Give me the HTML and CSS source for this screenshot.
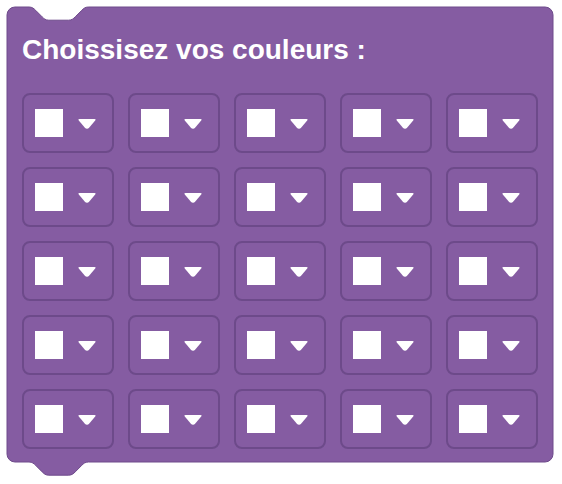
FILE: index.html
```html
<!DOCTYPE html>
<html lang="fr">
<head>
<meta charset="utf-8">
<title>Choissisez vos couleurs</title>
<link rel="stylesheet" href="styles.css">
</head>
<body>
<div class="block">
  <svg class="shape" width="548" height="472" viewBox="-1 -1 548 472" aria-hidden="true">
    <path class="body" d="M 0 8 A 8 8 0 0 1 8 0 L 22 0 C 25.3 0 26.95 1.65 28.6 3.3 L 35.2 9.9 C 36.85 11.55 38.5 13.2 41.8 13.2 L 61.6 13.2 C 64.9 13.2 66.55 11.55 68.2 9.9 L 74.8 3.3 C 76.45 1.65 78.1 0 81.4 0 L 538 0 A 8 8 0 0 1 546 8 L 546 447 A 8 8 0 0 1 538 455 L 81.4 455 C 78.1 455 76.45 456.65 74.8 458.3 L 68.2 464.9 C 66.55 466.55 64.9 468.2 61.6 468.2 L 41.8 468.2 C 38.5 468.2 36.85 466.55 35.2 464.9 L 28.6 458.3 C 26.95 456.65 25.3 455 22 455 L 8 455 A 8 8 0 0 1 0 447 Z" />
  </svg>
  <div class="title">Choissisez vos couleurs :</div>
  <div class="grid">
    <div class="cell"><span class="swatch"></span><svg class="arrow" width="18" height="10" viewBox="0 0 18 10"><path d="M1.5,0 H16.5 Q18.3,0 17.2,1.6 L11.3,8.4 Q9,10.9 6.7,8.4 L0.8,1.6 Q-0.3,0 1.5,0 Z"/></svg></div>
    <div class="cell"><span class="swatch"></span><svg class="arrow" width="18" height="10" viewBox="0 0 18 10"><path d="M1.5,0 H16.5 Q18.3,0 17.2,1.6 L11.3,8.4 Q9,10.9 6.7,8.4 L0.8,1.6 Q-0.3,0 1.5,0 Z"/></svg></div>
    <div class="cell"><span class="swatch"></span><svg class="arrow" width="18" height="10" viewBox="0 0 18 10"><path d="M1.5,0 H16.5 Q18.3,0 17.2,1.6 L11.3,8.4 Q9,10.9 6.7,8.4 L0.8,1.6 Q-0.3,0 1.5,0 Z"/></svg></div>
    <div class="cell"><span class="swatch"></span><svg class="arrow" width="18" height="10" viewBox="0 0 18 10"><path d="M1.5,0 H16.5 Q18.3,0 17.2,1.6 L11.3,8.4 Q9,10.9 6.7,8.4 L0.8,1.6 Q-0.3,0 1.5,0 Z"/></svg></div>
    <div class="cell"><span class="swatch"></span><svg class="arrow" width="18" height="10" viewBox="0 0 18 10"><path d="M1.5,0 H16.5 Q18.3,0 17.2,1.6 L11.3,8.4 Q9,10.9 6.7,8.4 L0.8,1.6 Q-0.3,0 1.5,0 Z"/></svg></div>

    <div class="cell"><span class="swatch"></span><svg class="arrow" width="18" height="10" viewBox="0 0 18 10"><path d="M1.5,0 H16.5 Q18.3,0 17.2,1.6 L11.3,8.4 Q9,10.9 6.7,8.4 L0.8,1.6 Q-0.3,0 1.5,0 Z"/></svg></div>
    <div class="cell"><span class="swatch"></span><svg class="arrow" width="18" height="10" viewBox="0 0 18 10"><path d="M1.5,0 H16.5 Q18.3,0 17.2,1.6 L11.3,8.4 Q9,10.9 6.7,8.4 L0.8,1.6 Q-0.3,0 1.5,0 Z"/></svg></div>
    <div class="cell"><span class="swatch"></span><svg class="arrow" width="18" height="10" viewBox="0 0 18 10"><path d="M1.5,0 H16.5 Q18.3,0 17.2,1.6 L11.3,8.4 Q9,10.9 6.7,8.4 L0.8,1.6 Q-0.3,0 1.5,0 Z"/></svg></div>
    <div class="cell"><span class="swatch"></span><svg class="arrow" width="18" height="10" viewBox="0 0 18 10"><path d="M1.5,0 H16.5 Q18.3,0 17.2,1.6 L11.3,8.4 Q9,10.9 6.7,8.4 L0.8,1.6 Q-0.3,0 1.5,0 Z"/></svg></div>
    <div class="cell"><span class="swatch"></span><svg class="arrow" width="18" height="10" viewBox="0 0 18 10"><path d="M1.5,0 H16.5 Q18.3,0 17.2,1.6 L11.3,8.4 Q9,10.9 6.7,8.4 L0.8,1.6 Q-0.3,0 1.5,0 Z"/></svg></div>

    <div class="cell"><span class="swatch"></span><svg class="arrow" width="18" height="10" viewBox="0 0 18 10"><path d="M1.5,0 H16.5 Q18.3,0 17.2,1.6 L11.3,8.4 Q9,10.9 6.7,8.4 L0.8,1.6 Q-0.3,0 1.5,0 Z"/></svg></div>
    <div class="cell"><span class="swatch"></span><svg class="arrow" width="18" height="10" viewBox="0 0 18 10"><path d="M1.5,0 H16.5 Q18.3,0 17.2,1.6 L11.3,8.4 Q9,10.9 6.7,8.4 L0.8,1.6 Q-0.3,0 1.5,0 Z"/></svg></div>
    <div class="cell"><span class="swatch"></span><svg class="arrow" width="18" height="10" viewBox="0 0 18 10"><path d="M1.5,0 H16.5 Q18.3,0 17.2,1.6 L11.3,8.4 Q9,10.9 6.7,8.4 L0.8,1.6 Q-0.3,0 1.5,0 Z"/></svg></div>
    <div class="cell"><span class="swatch"></span><svg class="arrow" width="18" height="10" viewBox="0 0 18 10"><path d="M1.5,0 H16.5 Q18.3,0 17.2,1.6 L11.3,8.4 Q9,10.9 6.7,8.4 L0.8,1.6 Q-0.3,0 1.5,0 Z"/></svg></div>
    <div class="cell"><span class="swatch"></span><svg class="arrow" width="18" height="10" viewBox="0 0 18 10"><path d="M1.5,0 H16.5 Q18.3,0 17.2,1.6 L11.3,8.4 Q9,10.9 6.7,8.4 L0.8,1.6 Q-0.3,0 1.5,0 Z"/></svg></div>

    <div class="cell"><span class="swatch"></span><svg class="arrow" width="18" height="10" viewBox="0 0 18 10"><path d="M1.5,0 H16.5 Q18.3,0 17.2,1.6 L11.3,8.4 Q9,10.9 6.7,8.4 L0.8,1.6 Q-0.3,0 1.5,0 Z"/></svg></div>
    <div class="cell"><span class="swatch"></span><svg class="arrow" width="18" height="10" viewBox="0 0 18 10"><path d="M1.5,0 H16.5 Q18.3,0 17.2,1.6 L11.3,8.4 Q9,10.9 6.7,8.4 L0.8,1.6 Q-0.3,0 1.5,0 Z"/></svg></div>
    <div class="cell"><span class="swatch"></span><svg class="arrow" width="18" height="10" viewBox="0 0 18 10"><path d="M1.5,0 H16.5 Q18.3,0 17.2,1.6 L11.3,8.4 Q9,10.9 6.7,8.4 L0.8,1.6 Q-0.3,0 1.5,0 Z"/></svg></div>
    <div class="cell"><span class="swatch"></span><svg class="arrow" width="18" height="10" viewBox="0 0 18 10"><path d="M1.5,0 H16.5 Q18.3,0 17.2,1.6 L11.3,8.4 Q9,10.9 6.7,8.4 L0.8,1.6 Q-0.3,0 1.5,0 Z"/></svg></div>
    <div class="cell"><span class="swatch"></span><svg class="arrow" width="18" height="10" viewBox="0 0 18 10"><path d="M1.5,0 H16.5 Q18.3,0 17.2,1.6 L11.3,8.4 Q9,10.9 6.7,8.4 L0.8,1.6 Q-0.3,0 1.5,0 Z"/></svg></div>

    <div class="cell"><span class="swatch"></span><svg class="arrow" width="18" height="10" viewBox="0 0 18 10"><path d="M1.5,0 H16.5 Q18.3,0 17.2,1.6 L11.3,8.4 Q9,10.9 6.7,8.4 L0.8,1.6 Q-0.3,0 1.5,0 Z"/></svg></div>
    <div class="cell"><span class="swatch"></span><svg class="arrow" width="18" height="10" viewBox="0 0 18 10"><path d="M1.5,0 H16.5 Q18.3,0 17.2,1.6 L11.3,8.4 Q9,10.9 6.7,8.4 L0.8,1.6 Q-0.3,0 1.5,0 Z"/></svg></div>
    <div class="cell"><span class="swatch"></span><svg class="arrow" width="18" height="10" viewBox="0 0 18 10"><path d="M1.5,0 H16.5 Q18.3,0 17.2,1.6 L11.3,8.4 Q9,10.9 6.7,8.4 L0.8,1.6 Q-0.3,0 1.5,0 Z"/></svg></div>
    <div class="cell"><span class="swatch"></span><svg class="arrow" width="18" height="10" viewBox="0 0 18 10"><path d="M1.5,0 H16.5 Q18.3,0 17.2,1.6 L11.3,8.4 Q9,10.9 6.7,8.4 L0.8,1.6 Q-0.3,0 1.5,0 Z"/></svg></div>
    <div class="cell"><span class="swatch"></span><svg class="arrow" width="18" height="10" viewBox="0 0 18 10"><path d="M1.5,0 H16.5 Q18.3,0 17.2,1.6 L11.3,8.4 Q9,10.9 6.7,8.4 L0.8,1.6 Q-0.3,0 1.5,0 Z"/></svg></div>
  </div>
</div>
</body>
</html>
```

FILE: styles.css
```css
html, body {
  margin: 0;
  padding: 0;
  background: #ffffff;
}

.block {
  position: relative;
  z-index: 0;
  overflow: visible;
  box-sizing: border-box;
  width: 546px;
  height: 472px;
  margin: 7px 0 0 7px;
  padding: 27px 15px 30px 15px;
  font-family: "Liberation Sans", Arial, Helvetica, sans-serif;
}

.shape {
  position: absolute;
  left: -1px;
  top: -1px;
  z-index: -1;
  overflow: visible;
}

.shape .body {
  fill: #855ca2;
  stroke: #6e4a8b;
  stroke-width: 1;
}

.title {
  color: #ffffff;
  font-weight: bold;
  font-size: 28px;
  line-height: 32px;
  height: 32px;
  margin: 0 0 27px 0;
  white-space: nowrap;
}

.grid {
  display: grid;
  grid-template-columns: repeat(5, 92px);
  grid-auto-rows: 60px;
  column-gap: 14px;
  row-gap: 14px;
}

.cell {
  box-sizing: border-box;
  display: flex;
  align-items: center;
  padding-left: 11px;
  border: 2px solid #6d4a8a;
  border-radius: 8px;
}

.swatch {
  display: block;
  width: 28px;
  height: 28px;
  background: #ffffff;
}

.arrow {
  display: block;
  margin-left: 15px;
  margin-top: 1px;
}

.arrow path {
  fill: #ffffff;
}
```
